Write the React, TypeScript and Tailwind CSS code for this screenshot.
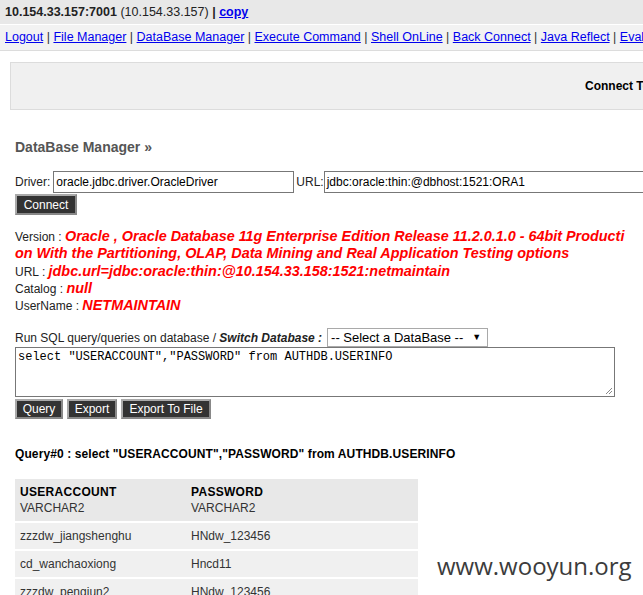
const navLinks = [
  "Logout",
  "File Manager",
  "DataBase Manager",
  "Execute Command",
  "Shell OnLine",
  "Back Connect",
  "Java Reflect",
  "Eval Java Code",
];

const rows = [
  ["zzzdw_jiangshenghu", "HNdw_123456"],
  ["cd_wanchaoxiong", "Hncd11"],
  ["zzzdw_pengjun2", "HNdw_123456"],
];

const btn =
  "shrink-0 bg-[#333] text-white text-[12px] leading-[16px] px-[5px] border-2 border-[#888] border-t-[#aaa] border-l-[#aaa]";

const App = () => {
  return (
    <div
      className="relative w-full h-[595px] overflow-hidden bg-white text-[12px] text-[#222]"
      style={{ fontFamily: '"Liberation Sans", Arial, sans-serif' }}
    >
      {/* Host bar */}
      <div className="h-[24px] bg-[#e8e8e8] pl-[5px] text-[12.5px] leading-[24px] whitespace-nowrap text-[#222]">
        <b>10.154.33.157:7001</b> (10.154.33.157) <b>|</b>{" "}
        <a className="font-bold text-[#0000ee] underline">copy</a>
      </div>

      {/* Menu */}
      <div className="h-[27px] bg-[#f2f2f2] border-t border-white border-b border-b-[#dcdcdc] pl-[5px] text-[12.5px] leading-[25px] whitespace-nowrap overflow-hidden">
        {navLinks.map((l, i) => (
          <span key={l}>
            {i > 0 && <span className="text-[#333]"> | </span>}
            <a className="text-[#0000ee] underline">{l}</a>
          </span>
        ))}
      </div>

      {/* Connect panel */}
      <div className="mt-[11px] ml-[10px] h-[48px] bg-[#f0f0f0] border border-[#dcdcdc] border-r-0 flex items-center pl-[574px] whitespace-nowrap overflow-hidden">
        <span className="font-bold text-[12px] text-black">Connect To Database</span>
      </div>

      <div className="px-[15px]">
        <div className="mt-[29px] text-[14px] leading-[16px] font-bold text-[#555] whitespace-nowrap">
          DataBase Manager »
        </div>

        {/* Driver / URL */}
        <div className="mt-[16px] flex items-center whitespace-nowrap">
          <span className="mr-[3px] shrink-0">Driver:</span>
          <div className="w-[241px] shrink-0 h-[22px] border border-[#777] px-[2px] leading-[20px] text-black">
            oracle.jdbc.driver.OracleDriver
          </div>
          <span className="ml-[2px] shrink-0">URL:</span>
          <div className="w-[340px] shrink-0 h-[22px] border border-[#777] px-[2px] leading-[20px] text-black">
            jdbc:oracle:thin:@dbhost:1521:ORA1
          </div>
        </div>
        <div className="mt-[1px] flex">
          <button className={btn + " w-[62px] h-[21px]"}>Connect</button>
        </div>

        {/* Info */}
        <div className="mt-[13px] leading-[16.3px] whitespace-nowrap">
          <div>
            Version :{" "}
            <b className="italic text-[14.4px] text-[#f00]">
              Oracle , Oracle Database 11g Enterprise Edition Release 11.2.0.1.0 - 64bit Producti
              <br />
              on With the Partitioning, OLAP, Data Mining and Real Application Testing options
            </b>
          </div>
          <div>
            URL :{" "}
            <b className="italic text-[14.4px] text-[#f00]">
              jdbc.url=jdbc:oracle:thin:@10.154.33.158:1521:netmaintain
            </b>
          </div>
          <div>
            Catalog : <b className="italic text-[14.4px] text-[#f00]">null</b>
          </div>
          <div>
            UserName : <b className="italic text-[14.4px] text-[#f00]">NETMAINTAIN</b>
          </div>
        </div>

        {/* SQL */}
        <div className="mt-[14px] flex items-center whitespace-nowrap">
          <span>
            Run SQL query/queries on database / <b className="italic">Switch Database :</b>
          </span>
          <div className="ml-[5px] w-[161px] h-[19px] border border-[#a9a9a9] bg-white flex items-center justify-between pl-[3px] pr-[6px] text-[13px] text-black">
            <span>-- Select a DataBase --</span>
            <span className="text-[9px]">▼</span>
          </div>
        </div>
        <div
          className="relative w-[600px] h-[50px] border border-[#777] px-[2px] pt-[2px] text-[12px] leading-[14px] text-black whitespace-pre"
          style={{ fontFamily: '"Liberation Mono", "Courier New", monospace' }}
        >
          select "USERACCOUNT","PASSWORD" from AUTHDB.USERINFO
          <svg className="absolute right-[1px] bottom-[1px]" width="8" height="8" viewBox="0 0 8 8">
            <path d="M7 1L1 7M7 4L4 7" stroke="#888" strokeWidth="1" />
          </svg>
        </div>
        <div className="mt-[2px] flex gap-[4px]">
          <button className={btn + " w-[48px] h-[20px]"}>Query</button>
          <button className={btn + " w-[50px] h-[20px]"}>Export</button>
          <button className={btn + " w-[90px] h-[20px]"}>Export To File</button>
        </div>

        {/* Result */}
        <div className="mt-[28px] font-bold text-[12px] leading-[14px] tracking-[0.1px] text-black whitespace-nowrap">
          Query#0 : select "USERACCOUNT","PASSWORD" from AUTHDB.USERINFO
        </div>
        <div className="mt-[18px] w-[403px] bg-[#f0f0f0] text-[#333]">
          <div className="flex h-[42px] bg-[#e8e8e8] pt-[5px] leading-[16px]">
            <div className="w-[171px] pl-[5px]">
              <div className="font-bold tracking-[0.3px] text-black">USERACCOUNT</div>
              <div>VARCHAR2</div>
            </div>
            <div className="pl-[5px]">
              <div className="font-bold tracking-[0.3px] text-black">PASSWORD</div>
              <div>VARCHAR2</div>
            </div>
          </div>
          {rows.map(([a, p]) => (
            <div key={a} className="flex h-[28px] items-center border-t-2 border-white">
              <div className="w-[171px] pl-[5px]">{a}</div>
              <div className="pl-[5px]">{p}</div>
            </div>
          ))}
        </div>
      </div>

      {/* watermark */}
      <div
        className="absolute left-[437px] top-[550px] text-[24px] leading-[32px] text-[#3c3c3c] whitespace-nowrap"
        style={{ fontFamily: '"Open Sans", "Noto Sans", sans-serif' }}
      >
        www.wooyun.org
      </div>
    </div>
  );
};

export default App;
